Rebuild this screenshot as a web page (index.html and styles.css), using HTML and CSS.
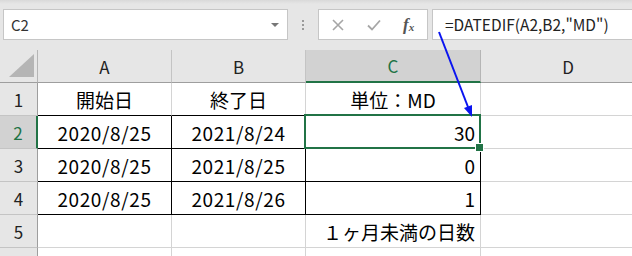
FILE: index.html
```html
<!DOCTYPE html>
<html lang="ja">
<head>
<meta charset="utf-8">
<link rel="stylesheet" href="styles.css">
</head>
<body>
<div class="app">
  <div class="fbar">
    <div class="namebox"><span class="ref">C2</span><span class="dd"></span></div>
    <div class="dots"><i></i><i></i><i></i></div>
    <div class="btns">
      <svg class="ico" width="12" height="12" viewBox="0 0 12 12"><path d="M1 1L11 11M11 1L1 11" stroke="#a6a6a6" stroke-width="1.6" fill="none"/></svg>
      <svg class="ico" width="14" height="12" viewBox="0 0 14 12"><path d="M1 6.5L5 10.5L13 1.5" stroke="#a6a6a6" stroke-width="1.8" fill="none"/></svg>
      <span class="fx">f<sub>x</sub></span>
    </div>
    <div class="formula">=DATEDIF(A2,B2,"MD")</div>
  </div>
  <div class="sheet">
    <div class="corner"><svg width="37" height="32" viewBox="0 0 37 32"><polygon points="9,27 34,27 34,4" fill="#b5b5b5"/></svg></div>
    <div class="ch">A</div>
    <div class="ch">B</div>
    <div class="ch sel">C</div>
    <div class="ch">D</div>

    <div class="rh">1</div>
    <div class="c ctr bb">開始日</div>
    <div class="c ctr bb">終了日</div>
    <div class="c ctr bb">単位：MD</div>
    <div class="c"></div>

    <div class="rh sel">2</div>
    <div class="c ctr blk d">2020/8/25</div>
    <div class="c ctr blk d">2021/8/24</div>
    <div class="c num blk active">30</div>
    <div class="c"></div>

    <div class="rh">3</div>
    <div class="c ctr blk d">2020/8/25</div>
    <div class="c ctr blk d">2021/8/25</div>
    <div class="c num blk">0</div>
    <div class="c"></div>

    <div class="rh">4</div>
    <div class="c ctr blk d">2020/8/25</div>
    <div class="c ctr blk d">2021/8/26</div>
    <div class="c num blk">1</div>
    <div class="c"></div>

    <div class="rh">5</div>
    <div class="c"></div>
    <div class="c"></div>
    <div class="c num">１ヶ月未満の日数</div>
    <div class="c"></div>

    <div class="rh"></div>
    <div class="c"></div>
    <div class="c"></div>
    <div class="c"></div>
    <div class="c"></div>
  </div>
  <svg class="arrow" width="632" height="256" viewBox="0 0 632 256">
    <line x1="439" y1="32" x2="468" y2="107" stroke="#0a14f0" stroke-width="2"/>
    <polygon points="472,117 464,108 472,105" fill="#0a14f0"/>
  </svg>
</div>
</body>
</html>
```
FILE: styles.css
```css
* { box-sizing: border-box; }
html, body { margin: 0; padding: 0; }
body {
  width: 632px;
  height: 256px;
  overflow: hidden;
  background: #fff;
  font-family: "Noto Sans CJK JP", "Noto Sans", sans-serif;
}
.app { position: relative; width: 632px; height: 256px; overflow: hidden; }

.fbar {
  height: 50px;
  width: 660px;
  background: #e6e6e6;
  background-image: linear-gradient(#d9d9d9, #e6e6e6 4px);
  display: flex;
  align-items: flex-start;
  padding: 9px 0 0 3px;
}
.fbar > * { flex-shrink: 0; }
.namebox {
  width: 285px;
  height: 31px;
  background: #fff;
  border: 1px solid #c6c6c6;
  display: flex;
  align-items: center;
  justify-content: space-between;
  padding: 0 8px 0 7px;
}
.ref { font-size: 15px; color: #333; }
.dd {
  width: 0; height: 0;
  border-left: 4px solid transparent;
  border-right: 4px solid transparent;
  border-top: 4px solid #777;
}
.dots {
  width: 30px;
  height: 31px;
  display: flex;
  flex-direction: column;
  align-items: center;
  justify-content: center;
  gap: 2px;
}
.dots i { display: block; width: 2px; height: 2px; background: #9a9a9a; }
.btns {
  width: 110px;
  height: 31px;
  background: #fff;
  border: 1px solid #c6c6c6;
  display: flex;
  align-items: center;
  padding-left: 13px;
  gap: 21px;
}
.ico { display: block; }
.btns .ico:nth-child(2) { margin-left: 2px; }
.fx {
  font-family: "Liberation Serif", serif;
  font-style: italic;
  font-weight: bold;
  font-size: 17px;
  color: #555;
  margin-left: 1px;
  line-height: 1;
}
.fx sub { font-size: 11px; vertical-align: -1px; }
.formula {
  margin-left: 4px;
  width: 225px;
  height: 31px;
  background: #fff;
  border: 1px solid #c6c6c6;
  border-right: none;
  font-size: 15.5px;
  color: #222;
  padding-left: 12px;
  line-height: 29px;
  white-space: nowrap;
}

.sheet {
  display: grid;
  grid-template-columns: 38px 134px 134px 175px 175px;
  grid-template-rows: 33px 33px 33px 33px 33px 33px 9px;
  width: 656px;
}
.corner {
  background: #e6e6e6;
  border-right: 1px solid #b5b5b5;
  border-bottom: 1px solid #9e9e9e;
}
.corner svg { display: block; }
.ch {
  background: #e6e6e6;
  border-right: 1px solid #c4c4c4;
  border-bottom: 1px solid #9e9e9e;
  display: flex;
  align-items: center;
  justify-content: center;
  font-size: 17px;
  color: #222;
}
.ch.sel {
  background: #d2d2d2;
  color: #217346;
  border-bottom: 2px solid #217346;
  border-right-color: #b5b5b5;
}
.rh {
  background: #e6e6e6;
  border-right: 1px solid #9e9e9e;
  border-bottom: 1px solid #c4c4c4;
  display: flex;
  align-items: center;
  justify-content: center;
  font-size: 17px;
  color: #222;
}
.rh.sel {
  background: #d2d2d2;
  color: #217346;
  border-right: 2px solid #217346;
}
.c {
  border-right: 1px solid #d4d4d4;
  border-bottom: 1px solid #d4d4d4;
  display: flex;
  align-items: center;
  font-size: 19px;
  color: #000;
  white-space: nowrap;
  padding-top: 1px;
}
.ctr { justify-content: center; }
.d { letter-spacing: 0.6px; }
.num { justify-content: flex-end; padding-right: 5px; }
.bb { border-bottom-color: #000; }
.blk { border-right-color: #000; border-bottom-color: #000; }
.active { position: relative; z-index: 2; }
.active::before {
  content: "";
  position: absolute;
  left: -2px;
  top: -2px;
  right: -1px;
  bottom: -1px;
  border: 2px solid #217346;
}
.active::after {
  content: "";
  position: absolute;
  right: -4px;
  bottom: -4px;
  width: 7px;
  height: 7px;
  background: #217346;
  border: 1px solid #fff;
}
.arrow {
  position: absolute;
  left: 0;
  top: 0;
  pointer-events: none;
  z-index: 5;
}
```
